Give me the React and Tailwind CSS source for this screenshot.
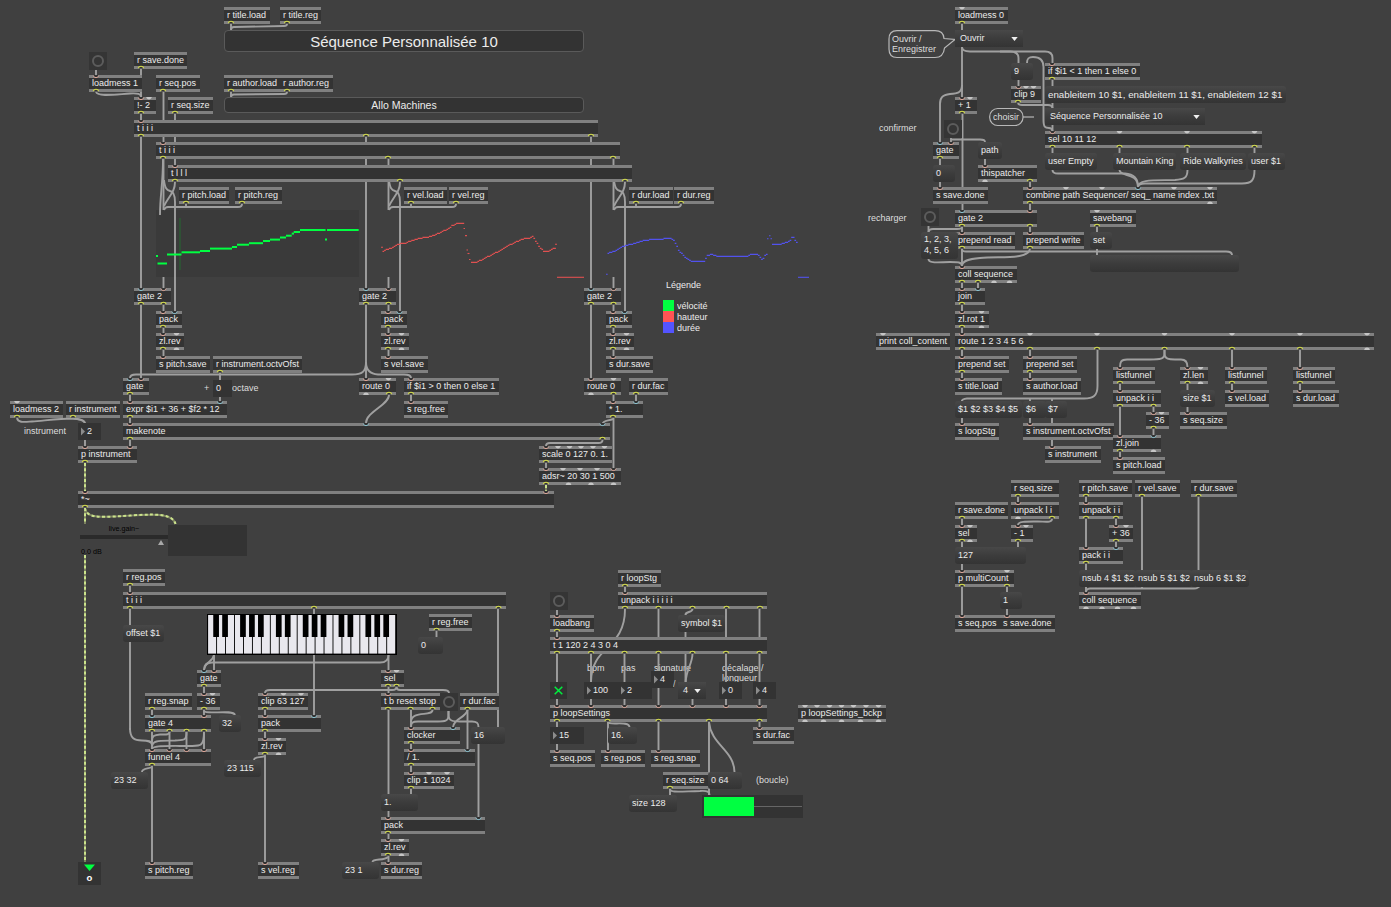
import React from "react";

// Patcher objects: [x, y, width, text, inlets, outlets]
// Port codes: h = hot inlet, c = cold inlet, y = connected outlet, u = unconnected port
const OBJECTS = [
  [224, 7, 46, "r title.load", "", "y231"],
  [280, 7, 41, "r title.reg", "", "y287"],
  [134, 52, 53, "r save.done", "", "y141"],
  [89, 75, 53, "loadmess 1", "h96", "y96"],
  [156, 75, 44, "r seq.pos", "", "y163"],
  [224, 75, 56, "r author.load", "", "y231"],
  [280, 75, 53, "r author.reg", "", "y287"],
  [134, 97, 22, "!- 2", "h141 u149", "y141"],
  [168, 97, 45, "r seq.size", "", "y175"],
  [134, 120, 464, "t i i i", "h141", "y141 y366 y591"],
  [156, 142, 464, "t i i i", "h163", "y163 y388 y613"],
  [168, 165, 464, "t l l l", "h175", "y175 y400 y625"],
  [179, 187, 50, "r pitch.load", "", "y186"],
  [235, 187, 47, "r pitch.reg", "", "y242"],
  [404, 187, 43, "r vel.load", "", "y411"],
  [449, 187, 39, "r vel.reg", "", "y456"],
  [629, 187, 44, "r dur.load", "", "y636"],
  [674, 187, 40, "r dur.reg", "", "y681"],
  [134, 288, 37, "gate 2", "c141 h163.5", "y141 y163.5"],
  [359, 288, 37, "gate 2", "c366 h388.5", "y366 y388.5"],
  [584, 288, 37, "gate 2", "c591 h613.5", "y591 y613.5"],
  [156, 311, 26, "pack", "h163 c174.5", "y163"],
  [381, 311, 26, "pack", "h388 c399.5", "y388"],
  [606, 311, 26, "pack", "h613 c624.5", "y613"],
  [156, 333, 28, "zl.rev", "h163 u176.5", "y163 u176.5"],
  [381, 333, 28, "zl.rev", "h388 u401.5", "y388 u401.5"],
  [606, 333, 28, "zl.rev", "h613 u626.5", "y613 u626.5"],
  [156, 356, 54, "s pitch.save", "h163", ""],
  [381, 356, 47, "s vel.save", "h388", ""],
  [606, 356, 47, "s dur.save", "h613", ""],
  [213, 356, 89, "r instrument.octvOfst", "", "y220"],
  [123, 378, 26, "gate", "c130 h141", "y130"],
  [359, 378, 37, "route 0", "h366 u388.5", "u366 y389"],
  [584, 378, 37, "route 0", "h591 u613.5", "u591 y613.5"],
  [404, 378, 95, "if $i1 > 0 then 0 else 1", "h411", "y411"],
  [404, 401, 44, "s reg.free", "h411", ""],
  [629, 378, 39, "r dur.fac", "", "y636"],
  [606, 401, 37, "* 1.", "h613 c636", "y613"],
  [123, 401, 104, "expr $i1 + 36 + $f2 * 12", "h130 c220", "y130"],
  [10, 401, 53, "loadmess 2", "u17", "y17"],
  [66, 401, 54, "r instrument", "", "y73"],
  [123, 423, 487, "makenote", "h130 c366 c602.5", "y130 y602.5"],
  [78, 446, 59, "p instrument", "h85 h130", "y85"],
  [539, 446, 73, "scale 0 127 0. 1.", "h546 u558 u569.5 u581 u593 u604.5", "y546"],
  [539, 468, 82, "adsr~ 20 30 1 500", "h546 u563 u580 u597 h613.5", "y546 u568.5 u591 u613.5"],
  [78, 491, 476, "*~", "h85 h546", "y85"],

  [123, 569, 42, "r reg.pos", "", "y130"],
  [123, 592, 383, "t i i i", "h130", "y130 y314 y498.5"],
  [197, 670, 24, "gate", "c204 h214", "y204"],
  [197, 693, 23, "- 36", "h204 u212.5", "y204"],
  [145, 693, 47, "r reg.snap", "", "y152"],
  [145, 715, 66, "gate 4", "c152 h204", "y152 y169.5 y186.5 y204"],
  [145, 749, 66, "funnel 4", "h152 h169.5 h186.5 h204", "y152"],
  [145, 862, 48, "s pitch.reg", "h152", ""],
  [258, 693, 50, "clip 63 127", "h265 u283.5 u301", "y265"],
  [258, 715, 63, "pack", "h265 c314", "y265"],
  [258, 738, 28, "zl.rev", "h265 u278.5", "y265 u278.5"],
  [258, 862, 41, "s vel.reg", "h265", ""],
  [381, 670, 23, "sel", "h388 u396.5", "y388 y396.5"],
  [381, 693, 59, "t b reset stop", "h388", "y388 y410.5 y432.5"],
  [460, 693, 39, "r dur.fac", "", "y467.5"],
  [429, 614, 43, "r reg.free", "", "y436.5"],
  [404, 727, 56, "clocker", "h411 c453", "y411"],
  [404, 749, 71, "/ 1.", "h411 c467.5", "y411"],
  [404, 772, 50, "clip 1 1024", "h411 u429 u447", "y411"],
  [381, 817, 104, "pack", "h388 c478.5", "y388"],
  [381, 839, 28, "zl.rev", "h388 u401.5", "y388 u401.5"],
  [381, 862, 41, "s dur.reg", "h388", ""],

  [618, 570, 43, "r loopStg", "", "y625"],
  [618, 592, 149, "unpack i i i i i", "h625", "y625 y658.5 y692.5 y726.5 y760"],
  [550, 615, 44, "loadbang", "h557", "y557"],
  [550, 637, 217, "t 1 120 2 4 3 0 4", "h557", "y557 y591 y624.5 y658.5 y692.5 y726 y759.5"],
  [550, 705, 217, "p loopSettings", "h557 h591 h624.5 h658.5 h692.5 h726 h759.5", "y557 y607.5 y658.5 y709 y759.5"],
  [798, 705, 88, "p loopSettings_bckp", "u805 u817 u829.5 u841.5 u853.5 u866 u878.5", "u805 u823.5 u841.5 u860.5 u878.5"],
  [550, 750, 45, "s seq.pos", "h557", ""],
  [601, 750, 44, "s reg.pos", "h608", ""],
  [651, 750, 49, "s reg.snap", "h658.5", ""],
  [753, 727, 41, "s dur.fac", "h759.5", ""],
  [663, 772, 46, "r seq.size", "", "y670"],

  [955, 7, 53, "loadmess 0", "u962", "y962"],
  [1045, 63, 95, "if $i1 < 1 then 1 else 0", "h1052", "y1052"],
  [1011, 86, 30, "clip 9", "h1018.5 u1026 u1033.5", "y1018"],
  [955, 97, 22, "+ 1", "h962 u970", "y962"],
  [933, 142, 26, "gate", "c940 h951", "y940"],
  [978, 165, 59, "thispatcher", "h985", "u985 y1030"],
  [933, 187, 55, "s save.done", "h940", ""],
  [1045, 131, 217, "sel 10 11 12", "h1052.5 u1119.5 u1187 u1254.5", "y1052.5 y1119.5 y1187 y1254.5"],
  [1023, 187, 194, "combine path Sequencer/ seq_ name index .txt", "h1030 u1066 u1102 c1138 u1174 u1210", "y1030 u1210"],
  [955, 210, 82, "gate 2", "c962 h1030", "y962 y1030"],
  [1090, 210, 46, "savebang", "u1097", "y1097"],
  [955, 232, 60, "prepend read", "h962", "y962"],
  [1023, 232, 61, "prepend write", "h1030", "y1030"],
  [955, 266, 62, "coll sequence", "h962", "y962 y978 u994 u1009.5"],
  [955, 288, 30, "join", "h962 c978", "y962"],
  [955, 311, 34, "zl.rot 1", "h962 u981.5", "y962 u981.5"],
  [876, 333, 74, "print coll_content", "u883", ""],
  [955, 333, 419, "route 1 2 3 4 5 6", "h962 u1030 u1097 u1164.5 u1232 u1300 u1367", "y962 y1030 y1097 y1164.5 y1232 y1300 u1367"],
  [955, 356, 54, "prepend set", "h962", "y962"],
  [1023, 356, 54, "prepend set", "h1030", "y1030"],
  [955, 378, 47, "s title.load", "h962", ""],
  [1023, 378, 58, "s author.load", "h1030", ""],
  [955, 423, 44, "s loopStg", "h962", ""],
  [1023, 423, 91, "s instrument.octvOfst", "h1030", ""],
  [1045, 446, 56, "s instrument", "h1052", ""],
  [1113, 367, 42, "listfunnel", "h1120", "y1120"],
  [1113, 390, 48, "unpack i i", "h1120", "y1120 y1153.5"],
  [1146, 412, 23, "- 36", "h1153.5 u1161.5", "y1153.5"],
  [1113, 435, 48, "zl.join", "h1120 c1153.5", "y1120 u1153.5"],
  [1113, 457, 52, "s pitch.load", "h1120", ""],
  [1180, 367, 28, "zl.len", "h1187.5 u1200.5", "y1187.5 u1200.5"],
  [1180, 412, 47, "s seq.size", "h1187.5", ""],
  [1225, 367, 42, "listfunnel", "h1232", "y1232"],
  [1225, 390, 44, "s vel.load", "h1232", ""],
  [1293, 367, 42, "listfunnel", "h1300", "y1300"],
  [1293, 390, 46, "s dur.load", "h1300", ""],

  [1011, 480, 48, "r seq.size", "", "y1018"],
  [955, 502, 53, "r save.done", "", "y962"],
  [1011, 502, 48, "unpack l i", "h1018", "u1018 y1052"],
  [955, 525, 22, "sel", "h962 u970", "y962 u970"],
  [1011, 525, 22, "- 1", "h1018 u1026", "y1018"],
  [955, 570, 59, "p multiCount", "h962 u1007", "y962 y1007"],
  [955, 615, 45, "s seq.pos", "h962", ""],
  [1000, 615, 55, "s save.done", "h1007", ""],
  [1079, 480, 53, "r pitch.save", "", "y1086"],
  [1135, 480, 45, "r vel.save", "", "y1142"],
  [1191, 480, 46, "r dur.save", "", "y1198.5"],
  [1079, 502, 44, "unpack i i", "h1086", "y1086 y1116"],
  [1109, 525, 24, "+ 36", "h1116 u1126", "y1116"],
  [1079, 547, 44, "pack i i", "h1086 c1116", "y1086"],
  [1079, 592, 62, "coll sequence", "h1086", "u1086 u1102 u1117.5 u1133.5"],
];

// Message boxes: [x, y, width, height, text]
const MESSAGES = [
  [123, 625, 41, 17, "offset $1"],
  [219, 715, 22, 17, "32"],
  [111, 772, 37, 17, "23 32"],
  [224, 760, 37, 17, "23 115"],
  [418, 637, 25, 17, "0"],
  [381, 794, 37, 17, "1."],
  [471, 727, 34, 17, "16"],
  [342, 862, 37, 17, "23 1"],
  [678, 615, 47, 17, "symbol $1"],
  [608, 727, 29, 17, "16."],
  [708, 772, 34, 17, "0 64"],
  [629, 795, 48, 17, "size 128"],
  [1011, 63, 22, 17, "9"],
  [978, 142, 24, 17, "path"],
  [933, 165, 22, 17, "0"],
  [1045, 153, 52, 17, "user Empty"],
  [1113, 153, 63, 17, "Mountain King"],
  [1180, 153, 66, 17, "Ride Walkyries"],
  [1248, 153, 37, 17, "user $1"],
  [921, 232, 37, 27, "1, 2, 3,\n4, 5, 6"],
  [1090, 232, 22, 17, "set"],
  [1090, 255, 149, 17, ""],
  [955, 401, 67, 17, "$1 $2 $3 $4 $5"],
  [1023, 401, 23, 17, "$6"],
  [1045, 401, 22, 17, "$7"],
  [1180, 390, 35, 17, "size $1"],
  [955, 547, 71, 17, "127"],
  [1000, 592, 22, 17, "1"],
  [1079, 570, 57, 17, "nsub 4 $1 $2"],
  [1135, 570, 57, 17, "nsub 5 $1 $2"],
  [1191, 570, 58, 17, "nsub 6 $1 $2"],
];

// Number boxes: [x, y, width, text, hasArrow]
const NUMBERS = [
  [213, 380, 19, "0", false],
  [78, 423, 23, "2", true],
  [651, 671, 23, "4", true],
  [584, 682, 34, "100", true],
  [618, 682, 34, "2", true],
  [719, 682, 23, "0", true],
  [753, 682, 23, "4", true],
  [550, 727, 34, "15", true],
];

// Drop-down menus: [x, y, width, text]
const MENUS = [
  [955, 30, 68, "Ouvrir"],
  [1045, 108, 160, "Séquence Personnalisée 10"],
  [678, 682, 28, "4"],
];

const BANGS = [[89, 52], [440, 693], [550, 592], [944, 120], [921, 208]];

// Comments: [x, y, text], y is the top of a 10px line
const COMMENTS = [
  [204, 383, "+"],
  [232, 383, "octave"],
  [24, 426, "instrument"],
  [587, 663, "bpm"],
  [621, 663, "pas"],
  [654, 663, "signature"],
  [722, 663, "décalage /\nlongueur"],
  [756, 775, "(boucle)"],
  [879, 123, "confirmer"],
  [868, 213, "recharger"],
  [892, 34, "Ouvrir /\nEnregistrer"],
  [993, 112, "choisir"],
];

// Straight vertical cords: [x, y1, y2]
const STRAIGHT = [
  [231, 24, 30], [231, 92, 97], [96, 70, 75], [141, 69, 97], [141, 114, 120],
  [163.5, 92, 142], [175, 114, 165], [141, 137, 288], [366, 137, 288], [591, 137, 288],
  [163.5, 159, 210], [388.5, 159, 210], [613.5, 159, 210],
  [163.5, 277, 288], [388.5, 277, 288], [613.5, 277, 288],
  [141, 305, 378], [366, 305, 378], [591, 305, 378],
  [163.5, 305, 356], [388.5, 305, 356], [613.5, 305, 356],
  [220, 373, 401], [130, 395, 446], [411, 395, 401], [613.5, 395, 468], [636, 395, 401],
  [546, 463, 468], [85, 440, 446],
  [130, 586, 730], [314, 609, 715], [204, 687, 715], [214, 655, 670],
  [152, 710, 862], [169.5, 732, 749], [186.5, 732, 749], [204, 732, 749],
  [265, 710, 862], [388.5, 655, 862], [411, 710, 794], [467.5, 710, 749],
  [498, 609, 727], [436.5, 631, 637],
  [625, 587, 592], [557, 610, 750], [591, 654, 705], [624.5, 654, 705], [658.5, 609, 750],
  [692.5, 699, 705], [685.5, 631, 682], [726, 609, 705], [759.5, 609, 727],
  [608, 722, 750], [709, 722, 795], [670, 789, 795],
  [962, 24, 97], [962.5, 114, 210], [1018.5, 79, 86], [1052.5, 80, 131], [951, 138, 142],
  [985, 158, 165], [940, 159, 187], [1030, 182, 210],
  [1052.5, 148, 153], [1119.5, 148, 153], [1187.5, 148, 153], [1254.5, 148, 153],
  [928.5, 226, 232], [962, 227, 378], [978, 283, 288], [1030, 227, 232], [1097, 227, 255],
  [1030, 350, 378], [1030, 398, 423], [1052, 398, 446], [962, 400, 423],
  [1120, 384, 457], [1153.5, 407, 435], [1187.5, 384, 412], [1232, 350, 390], [1300, 350, 390],
  [962, 519, 615], [1018, 497, 502], [1018, 542, 547], [1007, 587, 615],
  [1086, 497, 592], [1116, 519, 547], [1142, 497, 588], [1198.5, 497, 588],
];

const CURVES = [
  "M287 24q0 2-3 2L234 27q-3 0-3 3",
  "M287 92q0 2-3 2L234 94.500q-3 0-3 3",
  "M96 92C98 97 115 94.500 130 93.500C138 93 141 94 141 97",
  "M163 159C163 185 160 195 160 215",
  "M366 362C366 372 362 374.500 352 374.500H136C132 374.500 130 375.500 130 378",
  "M366 362C366 370 370 374 378 374.500H404Q411 374.500 411 378",
  "M389 395C389 405 366 412 366 423",
  "M613 419C608 421 603 420 602.500 424",
  "M602.500 440q0 3-4 3H550q-4 0-4 3",
  "M17 418C18 423 24 422 32 421.500C45 420.500 60 418.500 72 418.500C80 419 84 420 85 423",
  "M73 418C75 420 84 418 85 423",
  "M130 728C130 738 134 740.500 142 740.500C148 740.500 152 741 152 745",
  "M169.500 732C169.500 735 166 734.500 160 734.500C154 735 152 736 152 741",
  "M186.500 732C186.500 741 184 740 175 740.500C160 741 153 740 152 746",
  "M204 732C204 747 200 746 190 746C170 746 153 745 152 749",
  "M214 655C213 662 205 661 204 670",
  "M388.500 655C388.500 661 385 662.500 380 662.500H212C206 662.500 204 665 204 670",
  "M204 711C206 715 233 709 235 715",
  "M152 767C148 769 142 768 142 772",
  "M265 756C262 758 254 756 254 760",
  "M396.500 687Q396.500 690 392 690H270Q265 690 265 693",
  "M396.500 687Q396.500 690 400 690H443Q449 690 449 693",
  "M432.500 710C432.500 717 411 710 411 722",
  "M448.500 711V715C448.500 722 444 721.500 436 721.500H418C412 721.500 411 723 411 727",
  "M448.500 711V715C448.500 721 453 721.500 460 721.500H472C477 721.500 478.500 723 478.500 727V817",
  "M467.500 710C466 718 454 718 453 727",
  "M388 857C384 861 373 858 372.500 862",
  "M625 609C625 650 591 645 591 682",
  "M692.500 609C692.500 613 685 611 685.500 615",
  "M692.500 654C692 665 686 670 685.700 682",
  "M608 722C609 726 629 720 629.500 727",
  "M709 722C711 745 734 750 734.500 772",
  "M670 789C670 793 680 791.500 700 791C708 790.500 709.500 792 709.500 795",
  "M962 47Q962 51.500 970 51.500H1010Q1018.500 51.500 1018.500 58V63",
  "M1000 51.500H1045Q1052.500 51.500 1052.500 58V63",
  "M962 85C962 93 957 93.500 950 94C942 95 940 98 940 104V142",
  "M1027 63C1027 58 1029 57 1033 57C1040 57 1043.500 60 1043.500 67V120C1043.500 127 1045 128 1049 128Q1052 128 1052.500 131",
  "M1018 103Q1018.500 105 1022 105H1048Q1052 105 1052.500 108",
  "M951 139.500H980Q985 139.500 985 142",
  "M1052.500 170Q1052.500 173.500 1058 173.500H1125C1134 174 1138 178 1138 187",
  "M1119.500 170C1119.500 177 1138 172 1138 187",
  "M1187.500 170C1187.500 178 1184 179.500 1175 180C1155 180.500 1138 179 1138 187",
  "M1254.500 170C1254.500 180 1252 183.500 1242 183.500H1145Q1138 183.500 1138 187",
  "M962 227Q962 229 957 229H933Q929 229 928.500 232",
  "M1030 249C1028 260 1000 256 980 258C968 259 962 261 962 266",
  "M928.500 259C928.500 264 940 262 950 262C958 262 962 262 962 266",
  "M962 249Q962 251.500 966 251.500H1226Q1232 251.500 1232 255",
  "M1097.500 350V386C1097.500 396 1093 398.500 1084 398.500H967Q962 399 962 401",
  "M1164.500 350V354C1164.500 359 1160 359.500 1150 359.500H1127C1121 359.500 1120 362 1120 367",
  "M1164.500 350V354C1164.500 359 1169 359.500 1175 359.500H1181C1186 359.500 1187.500 362 1187.500 367",
  "M1052 519C1052 523 1045 521.500 1038 521.500C1028 521.500 1018 521 1018 525",
  "M1198.500 586Q1198.500 588.500 1194 588.500H1090Q1086 589 1086 592",
  "M242 204q0 3-4 3H168q-3 0-4 3",
  "M456 204q0 3-4 3H393q-3 0-4 3",
  "M681 204q0 3-4 3H618q-3 0-4 3",
];

// The same crossing bundle feeds each of the three multisliders
const BUNDLE = [
  "M164 180C165 189 167 190 170 191C173 191.500 175 195 175 202V311",
  "M175 182C175 192 169 196 164 206",
  "M186 204v2",
];

const SIGNAL = [
  "M85 463V491",
  "M85 508V524",
  "M85 508C86 518 100 517 115 516.500C140 515.500 172 510 175.500 524",
  "M85 555V862",
  "M546 485V491",
];

const GREEN = [
  [156, 158, 256], [157.5, 167, 263.5], [167, 181.5, 254.5], [181.5, 200, 252.3], [200, 210, 251],
  [210, 232, 248.6], [232, 237, 247], [237, 249, 244.7], [249, 263, 243.2], [263, 270, 241],
  [270, 280, 239.6], [280, 286, 237.5], [286, 291.7, 235.7], [291.7, 294, 233.6], [293.7, 300, 232],
  [300, 325.6, 230], [325, 327, 239.6], [327, 358.7, 230],
];

const RED = [
  [[381, 247.3], [383, 247.3]],
  [[382.5, 250.7], [387, 249], [393, 246.5], [397, 243.7], [405, 242.7], [412, 239.7], [420, 238], [430, 236], [438, 233], [446, 229], [452, 225], [457, 223], [463, 223]],
  [[463.5, 228.5], [465, 228.5]], [[465, 235.6], [467, 235.6]], [[466.5, 250], [468, 250]], [[467.5, 253.5], [469.5, 253.5]], [[469, 259.5], [470.5, 259.5]],
  [[471, 261.5], [477, 261.5], [480, 260], [487, 256.5], [496, 252], [503, 248], [510, 244], [523, 238.3], [530, 237.5], [532, 235.5], [534, 239.3], [538, 245.7], [543, 250.7], [547, 251.3], [551, 248.7], [554.5, 248]],
  [[555, 244.3], [557, 244.3]],
  [[557, 277.3], [584, 277.3]],
];

const BLUE = [
  [[606, 274.3], [607.7, 274.3]],
  [[607.5, 252.5], [615, 250.3], [622, 246.3], [627, 244.7], [633, 243.3], [643, 240.3], [653, 238.7], [671, 238.3], [674, 241.3], [678, 250], [684, 256.3], [690, 260.5], [693, 261.3], [703, 261.3], [707, 255], [711, 253.7], [717, 256.3], [747, 256.3], [749, 254.3], [757, 254.3], [762, 259.7], [764, 255.7], [767, 253.3]],
  [[767, 238.7], [768.5, 238.7]], [[769, 235.7], [770.5, 235.7]], [[770.5, 238.7], [772, 238.7]],
  [[772, 244.3], [778, 244.3], [783, 242.7], [789, 240.7], [792, 235.7], [794.5, 240], [797, 243.7]],
  [[798, 277.3], [809, 277.3]],
];

// Turns a polyline into the short horizontal steps that a multislider draws
function steps(points) {
  if (points.length === 2) return `M${points[0][0]} ${points[0][1]}H${points[1][0]}`;
  let d = "";
  const end = points[points.length - 1][0];
  let k = 0;
  for (let x = points[0][0]; x < end; x += 1.6) {
    while (k < points.length - 2 && points[k + 1][0] < x) k++;
    const [x0, y0] = points[k];
    const [x1, y1] = points[k + 1];
    const y = Math.round(y0 + ((y1 - y0) * (x - x0)) / (x1 - x0)) + 0.4;
    d += `M${x.toFixed(1)} ${y}h1.7`;
  }
  return d;
}

function parsePorts(spec) {
  return spec ? spec.split(" ").map((p) => [p[0], Number(p.slice(1))]) : [];
}

function Inlet({ kind, x, y }) {
  if (kind === "u") return <path d={`M${x - 2.8} ${y}h5.600c-.5 3.200-5.100 3.200-5.600 0z`} fill="#c6c6c6" />;
  return (
    <g>
      <path d={`M${x - 2.4} ${y}h4.800l-.8 2.500h-3.200z`} fill="#333333" />
      <path d={`M${x - 2.6} ${y + 0.7}c.6 2.500 4.600 2.500 5.200 0`} fill="none" stroke={kind === "h" ? "#eeb0a0" : "#8fd0e0"} strokeWidth="1" />
    </g>
  );
}

function Outlet({ kind, x, y }) {
  if (kind === "u") return <path d={`M${x - 2.8} ${y + 17}h5.600c-.5-3.200-5.100-3.200-5.600 0z`} fill="#c6c6c6" />;
  return (
    <g>
      <path d={`M${x - 2.2} ${y + 16.4}h4.400l-.6-2h-3.200z`} fill="#333333" />
      <path d={`M${x - 2.7} ${y + 16.2}c.6-2.600 4.800-2.600 5.400 0`} fill="none" stroke="#d3dc4a" strokeWidth="1.100" />
    </g>
  );
}

// Condensed run of comment text
function Caption({ children }) {
  return <span className="inline-block origin-left scale-x-[0.923]">{children}</span>;
}

// Condensed run of text inside a box, raised to sit on the box's optical centre
function Label({ children }) {
  return <span className="inline-block origin-left -translate-y-[0.700px] scale-x-[0.923]">{children}</span>;
}

function ObjectBox({ x, y, w, text }) {
  return (
    <div className="absolute h-[17px] whitespace-pre border-y-[3px] border-[#808080] bg-[#333333] pl-[3px] leading-[11px]" style={{ left: x, top: y, width: w }}>
      <Label>{text}</Label>
    </div>
  );
}

function Message({ x, y, w, h, text }) {
  const multiline = text.includes("\n");
  return (
    <div
      className={`absolute whitespace-pre rounded-[3px] bg-linear-to-b from-[#484848] via-[#3c3c3c] to-[#343434] pl-[3px] ${multiline ? "pt-[3px] leading-[10.5px]" : "leading-[17px]"}`}
      style={{ left: x, top: y, width: w, height: h }}
    >
      <Label>{text}</Label>
    </div>
  );
}

function NumberBox({ x, y, w, text, arrow }) {
  return (
    <div className="absolute flex h-[17px] items-center bg-[#333333] pl-[3px] leading-[17px]" style={{ left: x, top: y, width: w }}>
      {arrow && (
        <svg className="mr-[1.500px] h-[9px] w-[4px]" viewBox="0 0 4 9">
          <path d="M0 0.500L4 4.500L0 8.500z" fill="#8c8c8c" />
        </svg>
      )}
      <Label>{text}</Label>
    </div>
  );
}

function Menu({ x, y, w, text }) {
  return (
    <div className="absolute flex h-[17px] items-center justify-between whitespace-pre bg-linear-to-b from-[#484848] via-[#3c3c3c] to-[#343434] pr-[5px] pl-[4.500px] leading-[17px]" style={{ left: x, top: y, width: w }}>
      <Label>{text}</Label>
      <svg className="h-[4px] w-[7px] shrink-0" viewBox="0 0 7 4">
        <path d="M0.300 0h6.400L3.500 4z" fill="#f0f0f0" />
      </svg>
    </div>
  );
}

function Bang({ x, y }) {
  return (
    <div className="absolute flex size-[18px] items-center justify-center bg-[#353535]" style={{ left: x, top: y }}>
      <span className="size-[12px] rounded-full border-2 border-[#5c5c5c]" />
    </div>
  );
}

function Legend() {
  return (
    <section className="absolute top-[280px] left-[663px] flex flex-col gap-[10px]">
      <h2 className="pl-[3px] leading-[10px]">
        <Caption>Légende</Caption>
      </h2>
      <ul className="flex flex-col leading-[11px]">
        <li className="flex gap-[3px]">
          <span className="h-[11px] w-[11px] bg-[#00ff41]" />
          <Caption>vélocité</Caption>
        </li>
        <li className="flex gap-[3px]">
          <span className="h-[11px] w-[11px] bg-[#ff5454]" />
          <Caption>hauteur</Caption>
        </li>
        <li className="flex gap-[3px]">
          <span className="h-[11px] w-[11px] bg-[#5454ff]" />
          <Caption>durée</Caption>
        </li>
      </ul>
    </section>
  );
}

function Keyboard() {
  const keyWidth = 188 / 21;
  const blacks = [];
  for (let i = 0; i < 21; i++) if (i % 7 !== 2 && i % 7 !== 6) blacks.push(i + 1);
  return (
    <svg className="absolute top-[614px] left-[207px] h-[41px] w-[190px]" viewBox="0 0 190 41">
      <rect width="190" height="41" fill="#000" />
      {Array.from({ length: 21 }, (_, i) => (
        <rect key={i} x={1 + i * keyWidth + 0.1} y="1" width={keyWidth - 0.9} height="38.600" fill="#e9e8ee" />
      ))}
      {blacks.map((b) => (
        <rect key={b} x={1 + b * keyWidth - 3.7} y="1" width="5.700" height="22" fill="#000" />
      ))}
    </svg>
  );
}

function Cords() {
  return (
    <svg className="absolute inset-0 h-[907px] w-[1391px]" viewBox="0 0 1391 907" fill="none">
      <g stroke="#a0a0a0" strokeWidth="1.900">
        {STRAIGHT.map(([x, a, b], i) => (
          <path key={i} d={`M${x} ${a}V${b}`} />
        ))}
        {CURVES.map((d, i) => (
          <path key={i} d={d} />
        ))}
        {[0, 225, 450].map((dx) => (
          <g key={dx} transform={`translate(${dx} 0)`}>
            {BUNDLE.map((d, i) => (
              <path key={i} d={d} />
            ))}
          </g>
        ))}
      </g>
      <g strokeWidth="2">
        {SIGNAL.map((d, i) => (
          <g key={i}>
            <path d={d} stroke="#7c8260" />
            <path d={d} stroke="#cbe38c" strokeDasharray="3 2.300" />
          </g>
        ))}
      </g>
      <g stroke="#b8b8b8" strokeWidth="1.200">
        <path d="M897 30.700H935Q943.500 30.700 944 38.500L955 39.500L944.500 48Q943.500 57.500 935 57.500H897Q889 57.500 889 49V39Q889 30.700 897 30.700z" />
        <rect x="989.700" y="108.500" width="33.300" height="17" rx="8" />
        <path d="M1023 117H1034" />
      </g>
    </svg>
  );
}

function Ports() {
  return (
    <svg className="pointer-events-none absolute inset-0 h-[907px] w-[1391px]" viewBox="0 0 1391 907">
      {OBJECTS.map(([, y, , , ins, outs], i) => (
        <g key={i}>
          {parsePorts(ins).map(([k, x], j) => (
            <Inlet key={j} kind={k} x={x} y={y} />
          ))}
          {parsePorts(outs).map(([k, x], j) => (
            <Outlet key={j} kind={k} x={x} y={y} />
          ))}
        </g>
      ))}
    </svg>
  );
}

function Sliders() {
  return (
    <svg className="absolute inset-0 h-[907px] w-[1391px]" viewBox="0 0 1391 907" fill="none">
      <path d="M180 218V270" stroke="#2c5a35" strokeWidth="1.500" />
      <g stroke="#00ff41" strokeWidth="2">
        {GREEN.map(([a, b, y], i) => (
          <path key={i} d={`M${a} ${y}H${b}`} />
        ))}
      </g>
      <g stroke="#e05050" strokeWidth="1.100">
        {RED.map((p, i) => (
          <path key={i} d={steps(p)} />
        ))}
      </g>
      <g stroke="#5252ee" strokeWidth="1.100">
        {BLUE.map((p, i) => (
          <path key={i} d={steps(p)} />
        ))}
      </g>
    </svg>
  );
}

export default function App() {
  return (
    <main className="relative h-[907px] w-[1391px] overflow-hidden bg-[#404040] font-['Liberation_Sans',Arial,sans-serif] text-[9.750px] text-[#ececec]">
      <div className="absolute top-[210px] left-[156px] h-[67px] w-[203px] bg-[#3a3a3a]" />
      {COMMENTS.map(([x, y, text], i) => (
        <div key={i} className="absolute whitespace-pre leading-[10px] text-[#dedede]" style={{ left: x, top: y }}>
          <Caption>{text}</Caption>
        </div>
      ))}
      <Cords />
      <Sliders />

      <div className="absolute top-[30px] left-[224px] flex h-[22px] w-[360px] items-center justify-center rounded-[4px] border-[1.500px] border-[#5a5a5a] bg-[#333333] pt-px text-[15px] leading-none">
        Séquence Personnalisée 10
      </div>
      <div className="absolute top-[97px] left-[224px] flex h-[16px] w-[360px] items-center justify-center rounded-[4px] border-[1.500px] border-[#5a5a5a] bg-[#333333] pt-px text-[10.500px] leading-none">
        Allo Machines
      </div>

      {OBJECTS.map(([x, y, w, text], i) => (
        <ObjectBox key={i} x={x} y={y} w={w} text={text} />
      ))}
      {MESSAGES.map(([x, y, w, h, text], i) => (
        <Message key={i} x={x} y={y} w={w} h={h} text={text} />
      ))}
      <div className="absolute top-[86px] left-[1045px] h-[17px] w-[241px] whitespace-pre rounded-[3px] bg-linear-to-b from-[#484848] via-[#3c3c3c] to-[#343434] pl-[3px] leading-[17px]">
        <span className="inline-block origin-left scale-x-[0.999]">enableitem 10 $1, enableitem 11 $1, enableitem 12 $1</span>
      </div>
      {NUMBERS.map(([x, y, w, text, arrow], i) => (
        <NumberBox key={i} x={x} y={y} w={w} text={text} arrow={arrow} />
      ))}
      <div className="absolute top-[679px] left-[673px] leading-[10px] text-[#c8c8c8]">
        <Caption>/</Caption>
      </div>
      {MENUS.map(([x, y, w, text], i) => (
        <Menu key={i} x={x} y={y} w={w} text={text} />
      ))}
      {BANGS.map(([x, y], i) => (
        <Bang key={i} x={x} y={y} />
      ))}
      <Keyboard />
      <Legend />

      <div className="absolute top-[525px] left-[80px] flex">
        <div className="flex h-[31px] w-[88px] flex-col text-[7.200px] leading-[8px] text-[#000000]">
          <span className="self-center">live.gain~</span>
          <span className="mt-[2px] h-[4px] bg-[#2a2a2a]" />
          <svg className="mt-px ml-[78px] h-[5px] w-[6px]" viewBox="0 0 6 5">
            <path d="M3 0L6 5H0z" fill="#a8a8a8" />
          </svg>
          <span className="mt-[2.500px] pl-px">0.0 dB</span>
        </div>
        <div className="h-[31px] w-[79px] bg-[#333333]" />
      </div>

      <div className="absolute top-[862px] left-[78px] flex h-[23px] w-[23px] flex-col items-center bg-[#333333] pt-[2px]">
        <svg className="h-[7px] w-[11px]" viewBox="0 0 11 7">
          <path d="M0 0.500H11L5.500 7z" fill="#00ff41" />
        </svg>
        <span className="mt-[2px] text-[9.500px] leading-[10px] font-bold text-white">o</span>
      </div>

      <div className="absolute top-[682px] left-[550px] flex h-[17px] w-[17px] items-center justify-center bg-[#333333]">
        <svg className="size-[9px]" viewBox="0 0 9 9">
          <path d="M0.700 0.700L8.300 8.300M8.300 0.700L0.700 8.300" stroke="#00f03e" strokeWidth="1.500" />
        </svg>
      </div>

      <div className="absolute top-[795px] left-[702px] flex h-[23px] w-[101px] items-center bg-[#333333] pr-px pl-[1.500px]">
        <span className="h-[19px] w-[50px] bg-[#00ff41]" />
        <span className="h-px flex-1 bg-[#666666]" />
      </div>
      <Ports />
    </main>
  );
}
